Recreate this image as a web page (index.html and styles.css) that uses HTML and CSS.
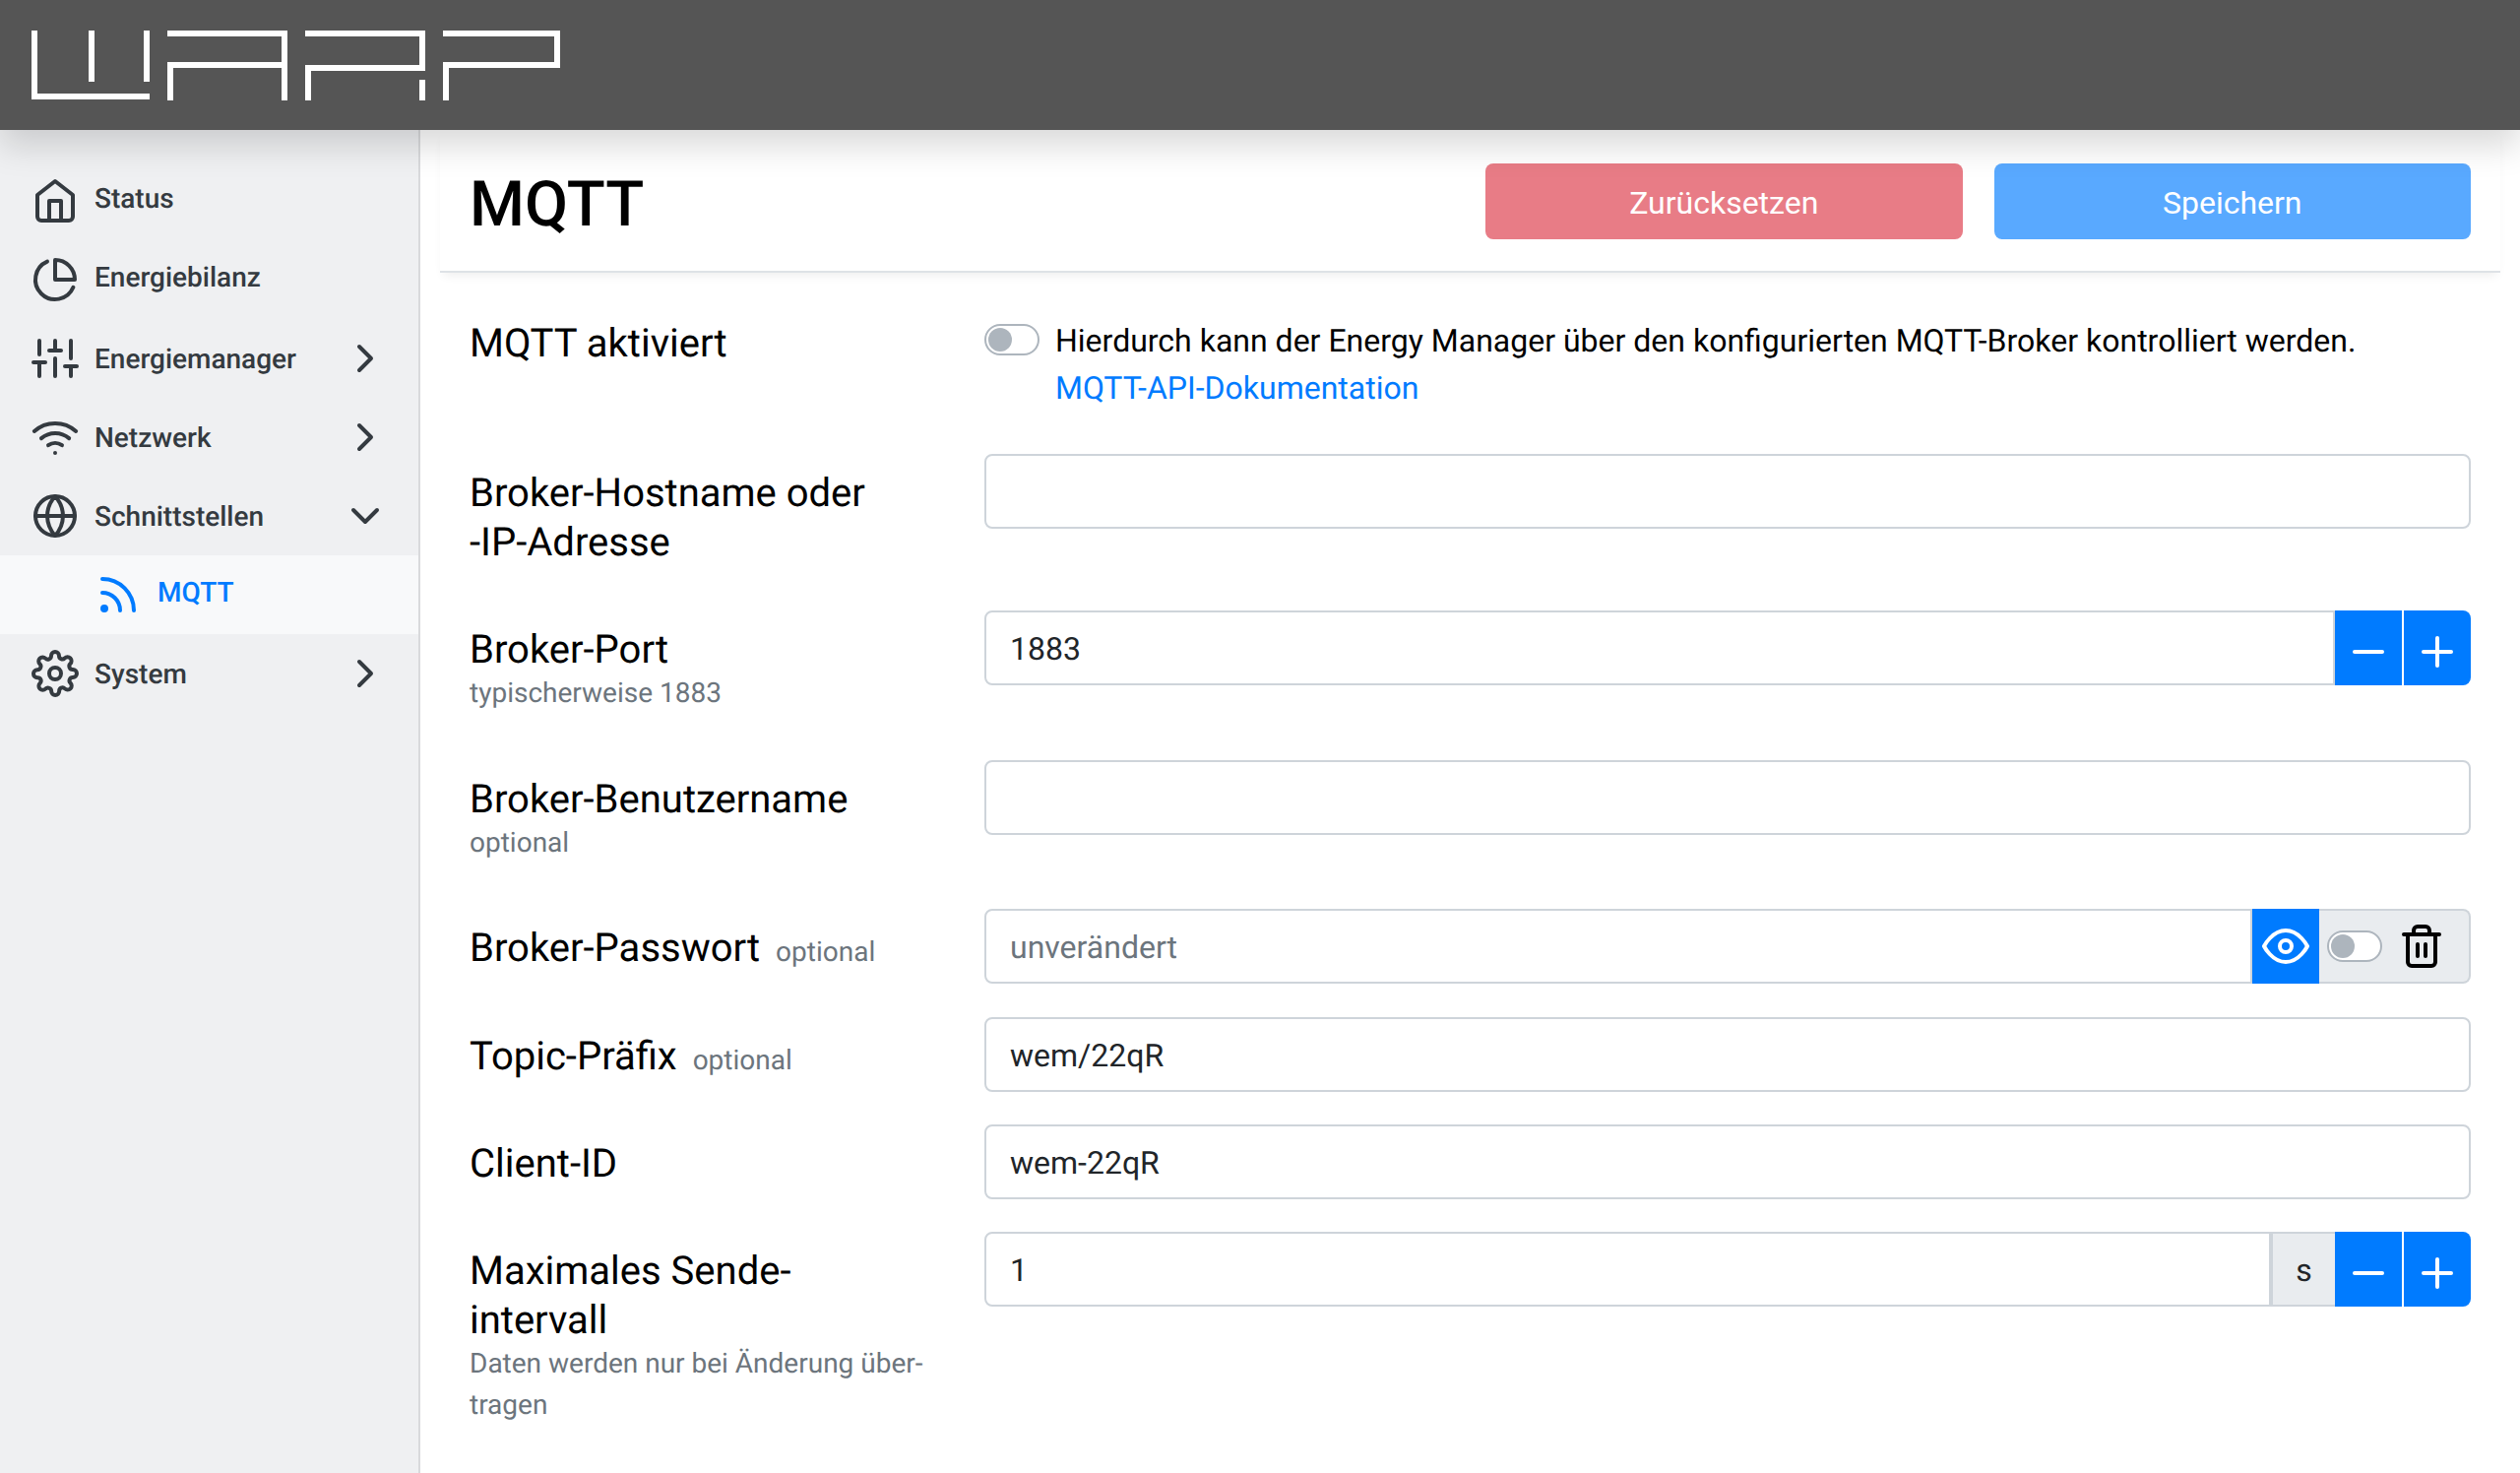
FILE: index.html
```html
<!DOCTYPE html>
<html lang="de">
<head>
  <meta charset="UTF-8">
  <title>MQTT</title>
  <link rel="stylesheet" href="styles.css">
</head>
<body>
  <header class="topbar">
    <svg class="logo" viewBox="0 0 538 71" fill="none" stroke="#fff" stroke-width="6">
      <path d="M3 0V67H120"/>
      <path d="M61 0V52"/>
      <path d="M117 0V52"/>
      <path d="M138 3H257V71"/>
      <path d="M141 71V35H257"/>
      <path d="M278 3H397V38H281V71"/>
      <path d="M397 50V71"/>
      <path d="M418 3H534V35H421V71"/>
    </svg>
  </header>

  <div class="layout">
    <nav class="sidebar">
      <a class="nav-item nav-plain">
        <svg class="icon" viewBox="0 0 24 24"><path d="M3 9l9-7 9 7v11a2 2 0 0 1-2 2H5a2 2 0 0 1-2-2z"/><polyline points="9 22 9 12 15 12 15 22"/></svg>
        <span>Status</span>
      </a>
      <a class="nav-item nav-plain">
        <svg class="icon" viewBox="0 0 24 24"><path d="M21.21 15.89A10 10 0 1 1 8 2.83"/><path d="M22 12A10 10 0 0 0 12 2v10z"/></svg>
        <span>Energiebilanz</span>
      </a>
      <a class="nav-item">
        <svg class="icon" viewBox="0 0 24 24"><line x1="4" y1="21" x2="4" y2="14"/><line x1="4" y1="10" x2="4" y2="3"/><line x1="12" y1="21" x2="12" y2="12"/><line x1="12" y1="8" x2="12" y2="3"/><line x1="20" y1="21" x2="20" y2="16"/><line x1="20" y1="12" x2="20" y2="3"/><line x1="1" y1="14" x2="7" y2="14"/><line x1="9" y1="8" x2="15" y2="8"/><line x1="17" y1="16" x2="23" y2="16"/></svg>
        <span>Energiemanager</span>
        <svg class="icon" viewBox="0 0 24 24"><polyline points="9 18 15 12 9 6"/></svg>
      </a>
      <a class="nav-item">
        <svg class="icon" viewBox="0 0 24 24"><path d="M5 12.55a11 11 0 0 1 14.08 0"/><path d="M1.42 9a16 16 0 0 1 21.16 0"/><path d="M8.53 16.11a6 6 0 0 1 6.95 0"/><line x1="12" y1="20" x2="12.01" y2="20"/></svg>
        <span>Netzwerk</span>
        <svg class="icon" viewBox="0 0 24 24"><polyline points="9 18 15 12 9 6"/></svg>
      </a>
      <a class="nav-item">
        <svg class="icon" viewBox="0 0 24 24"><circle cx="12" cy="12" r="10"/><line x1="2" y1="12" x2="22" y2="12"/><path d="M12 2a15.3 15.3 0 0 1 4 10 15.3 15.3 0 0 1-4 10 15.3 15.3 0 0 1-4-10 15.3 15.3 0 0 1 4-10z"/></svg>
        <span>Schnittstellen</span>
        <svg class="icon" viewBox="0 0 24 24"><polyline points="6 9 12 15 18 9"/></svg>
      </a>
      <a class="nav-sub">
        <svg class="icon" viewBox="0 0 24 24"><path d="M4 11a9 9 0 0 1 9 9"/><path d="M4 4a16 16 0 0 1 16 16"/><circle cx="5" cy="19" r="1"/></svg>
        <span>MQTT</span>
      </a>
      <a class="nav-item">
        <svg class="icon" viewBox="0 0 24 24"><circle cx="12" cy="12" r="3"/><path d="M19.4 15a1.65 1.65 0 0 0 .33 1.82l.06.06a2 2 0 0 1 0 2.83 2 2 0 0 1-2.83 0l-.06-.06a1.65 1.65 0 0 0-1.82-.33 1.65 1.65 0 0 0-1 1.51V21a2 2 0 0 1-2 2 2 2 0 0 1-2-2v-.09A1.65 1.65 0 0 0 9 19.4a1.65 1.65 0 0 0-1.82.33l-.06.06a2 2 0 0 1-2.83 0 2 2 0 0 1 0-2.83l.06-.06a1.65 1.65 0 0 0 .33-1.82 1.65 1.65 0 0 0-1.51-1H3a2 2 0 0 1-2-2 2 2 0 0 1 2-2h.09A1.65 1.65 0 0 0 4.6 9a1.65 1.65 0 0 0-.33-1.82l-.06-.06a2 2 0 0 1 0-2.83 2 2 0 0 1 2.83 0l.06.06a1.65 1.65 0 0 0 1.82.33H9a1.65 1.65 0 0 0 1-1.51V3a2 2 0 0 1 2-2 2 2 0 0 1 2 2v.09a1.65 1.65 0 0 0 1 1.51 1.65 1.65 0 0 0 1.82-.33l.06-.06a2 2 0 0 1 2.83 0 2 2 0 0 1 0 2.83l-.06.06a1.65 1.65 0 0 0-.33 1.82V9a1.65 1.65 0 0 0 1.51 1H21a2 2 0 0 1 2 2 2 2 0 0 1-2 2h-.09a1.65 1.65 0 0 0-1.51 1z"/></svg>
        <span>System</span>
        <svg class="icon" viewBox="0 0 24 24"><polyline points="9 18 15 12 9 6"/></svg>
      </a>
    </nav>

    <main class="content">
      <div class="page-head">
        <h1>MQTT</h1>
        <div class="actions">
          <button class="btn btn-reset">Zurücksetzen</button>
          <button class="btn btn-save">Speichern</button>
        </div>
      </div>

      <form>
        <div class="row row-toggle">
          <label class="row-label">MQTT aktiviert</label>
          <div class="toggle-line">
            <span class="switch"></span>
            <div class="toggle-text">
              Hierdurch kann der Energy Manager über den konfigurierten MQTT-Broker kontrolliert werden.<br>
              <a class="doc-link">MQTT-API-Dokumentation</a>
            </div>
          </div>
        </div>

        <div class="row">
          <label class="row-label">Broker-Hostname oder<br>-IP-Adresse</label>
          <div class="field"></div>
        </div>

        <div class="row">
          <div>
            <label class="row-label">Broker-Port</label>
            <div class="help">typischerweise 1883</div>
          </div>
          <div class="group">
            <div class="field">1883</div>
            <button class="step" type="button"><svg class="icon" viewBox="0 0 24 24"><line x1="5" y1="12" x2="19" y2="12"/></svg></button>
            <button class="step step-last" type="button"><svg class="icon" viewBox="0 0 24 24"><line x1="12" y1="5" x2="12" y2="19"/><line x1="5" y1="12" x2="19" y2="12"/></svg></button>
          </div>
        </div>

        <div class="row">
          <div>
            <label class="row-label">Broker-Benutzername</label>
            <div class="help">optional</div>
          </div>
          <div class="field"></div>
        </div>

        <div class="row">
          <label class="row-label">Broker-Passwort <span class="help-inline">optional</span></label>
          <div class="group">
            <div class="field placeholder">unverändert</div>
            <button class="eye" type="button"><svg class="icon" viewBox="0 0 24 24"><path d="M1 12s4-8 11-8 11 8 11 8-4 8-11 8-11-8-11-8z"/><circle cx="12" cy="12" r="3"/></svg></button>
            <div class="addon-clear">
              <span class="switch"></span>
              <svg class="icon trash" viewBox="0 0 24 24"><polyline points="3 6 5 6 21 6"/><path d="M19 6v14a2 2 0 0 1-2 2H7a2 2 0 0 1-2-2V6m3 0V4a2 2 0 0 1 2-2h4a2 2 0 0 1 2 2v2"/><line x1="10" y1="11" x2="10" y2="17"/><line x1="14" y1="11" x2="14" y2="17"/></svg>
            </div>
          </div>
        </div>

        <div class="row">
          <label class="row-label">Topic-Präfix <span class="help-inline">optional</span></label>
          <div class="field">wem/22qR</div>
        </div>

        <div class="row">
          <label class="row-label">Client-ID</label>
          <div class="field">wem-22qR</div>
        </div>

        <div class="row">
          <div>
            <label class="row-label">Maximales Sende-<br>intervall</label>
            <div class="help">Daten werden nur bei Änderung über-<br>tragen</div>
          </div>
          <div class="group">
            <div class="field">1</div>
            <div class="unit">s</div>
            <button class="step" type="button"><svg class="icon" viewBox="0 0 24 24"><line x1="5" y1="12" x2="19" y2="12"/></svg></button>
            <button class="step step-last" type="button"><svg class="icon" viewBox="0 0 24 24"><line x1="12" y1="5" x2="12" y2="19"/><line x1="5" y1="12" x2="19" y2="12"/></svg></button>
          </div>
        </div>
      </form>
    </main>
  </div>
</body>
</html>
```

FILE: styles.css
```css
* {
  box-sizing: border-box;
}

html, body {
  height: 100%;
}

body {
  margin: 0;
  overflow: hidden;
  font-family: Roboto, "Liberation Sans", sans-serif;
  font-size: 32px;
  line-height: 48px;
  text-rendering: geometricPrecision;
  color: #000;
  background: #fff;
}

.icon {
  width: 48px;
  height: 48px;
  flex: none;
  fill: none;
  stroke: currentColor;
  stroke-width: 2;
  stroke-linecap: round;
  stroke-linejoin: round;
}

.topbar {
  position: relative;
  z-index: 2;
  height: 132px;
  padding: 31px 0 0 32px;
  background: #555;
  box-shadow: 0 16px 32px rgba(0, 0, 0, 0.15);
}

.logo {
  display: block;
  width: 538px;
  height: 71px;
}

.layout {
  display: flex;
  height: 1364px;
}

.sidebar {
  width: 427px;
  flex: none;
  padding-top: 32px;
  background: #eff0f2;
  border-right: 2px solid #d9dadc;
}

.nav-item {
  display: flex;
  align-items: center;
  height: 80px;
  padding: 0 30px 0 32px;
  font-size: 28px;
  font-weight: 500;
  color: #343a40;
}

.nav-item > span {
  flex: 1;
  margin: 2px 0 0 16px;
}

.nav-plain > span {
  margin-top: -4px;
}

.nav-sub {
  display: flex;
  align-items: center;
  height: 80px;
  padding-left: 96px;
  font-size: 28px;
  font-weight: 500;
  color: #007bff;
  background: #f8f9fa;
}

.nav-sub > span {
  margin: -4px 0 0 16px;
}

.content {
  flex: 1;
  padding: 0 20px;
}

.page-head {
  display: flex;
  align-items: center;
  justify-content: space-between;
  height: 145px;
  padding: 2px 30px 0;
  border-bottom: 2px solid #dee2e6;
  box-shadow: 0 6px 10px -4px rgba(0, 0, 0, 0.08);
}

h1 {
  margin: 6px 0 0;
  font-size: 64px;
  font-weight: 500;
  line-height: 76px;
}

.actions {
  display: flex;
  gap: 32px;
}

.btn {
  width: 484.5px;
  height: 77px;
  padding: 2px 0 0;
  border: 0;
  border-radius: 8px;
  font: inherit;
  color: #fff;
}

.btn-reset {
  background: #e87c86;
}

.btn-save {
  background: #59a9ff;
}

form {
  padding: 33px 30px 0;
}

.row {
  display: grid;
  grid-template-columns: 523px 1fr;
  margin-bottom: 33.4px;
}

.row-toggle {
  margin-bottom: 43px;
}

.row-toggle .row-label {
  padding: 14px 0 12px;
}

.row-label {
  display: block;
  padding: 15px 0 11px;
  font-size: 40px;
  line-height: 50px;
}

.help {
  margin-top: -13px;
  padding-bottom: 13px;
  font-size: 28px;
  line-height: 42px;
  color: #6c757d;
}

.help-inline {
  margin-left: 6px;
  font-size: 28px;
  line-height: 1;
  color: #6c757d;
}

.toggle-line {
  display: flex;
  align-items: flex-start;
  gap: 16px;
  padding-top: 12px;
}

.switch {
  position: relative;
  display: block;
  width: 56px;
  height: 32px;
  flex: none;
  margin-top: 7px;
  background: #fff;
  border: 2px solid #adb5bd;
  border-radius: 16px;
}

.switch::after {
  content: "";
  position: absolute;
  top: 2px;
  left: 2px;
  width: 24px;
  height: 24px;
  border-radius: 50%;
  background: #adb5bd;
}

.doc-link {
  color: #007bff;
}

.field {
  flex: 1;
  height: 76px;
  padding: 13px 24px 11px;
  background: #fff;
  border: 2px solid #ced4da;
  border-radius: 8px;
  color: #212529;
}

.placeholder {
  color: #6c757d;
}

.group {
  display: flex;
}

.group .field {
  border-radius: 8px 0 0 8px;
}

.step {
  display: flex;
  align-items: center;
  justify-content: center;
  width: 68px;
  height: 76px;
  padding: 0;
  border: 0;
  margin-right: 2px;
  color: #fff;
  background: #007bff;
}

.step .icon {
  margin-top: 7px;
}

.step-last {
  margin-right: 0;
  border-radius: 0 8px 8px 0;
}

.eye {
  display: flex;
  align-items: center;
  justify-content: center;
  width: 68px;
  height: 76px;
  padding: 0;
  border: 0;
  color: #fff;
  background: #007bff;
}

.addon-clear {
  display: flex;
  align-items: center;
  gap: 16px;
  width: 154px;
  height: 76px;
  padding-left: 8px;
  background: #e9ecef;
  border: 2px solid #ced4da;
  border-left: 0;
  border-radius: 0 8px 8px 0;
}

.addon-clear .switch {
  margin-top: 0;
}

.trash {
  color: #000;
}

.unit {
  width: 65px;
  height: 76px;
  line-height: 74px;
  text-align: center;
  color: #212529;
  background: #e9ecef;
  border: 2px solid #ced4da;
  border-width: 2px 0 2px 2px;
}
```
